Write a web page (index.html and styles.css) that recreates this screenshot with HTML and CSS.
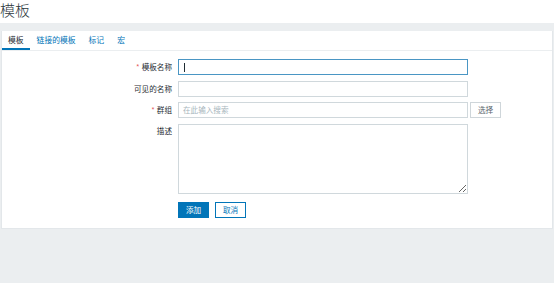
FILE: index.html
```html
<!DOCTYPE html>
<html lang="zh">
<head>
<meta charset="utf-8">
<link rel="stylesheet" href="styles.css">
</head>
<body>
<header class="page-header"><h1 class="title">模板</h1></header>
<main class="wrap">
  <section class="card">
    <nav class="tabs">
      <span class="tab active">模板</span>
      <span class="tab">链接的模板</span>
      <span class="tab">标记</span>
      <span class="tab">宏</span>
    </nav>
    <form class="form">
      <label class="lbl"><span class="req">*</span>模板名称</label>
      <div class="field"><div class="input focus"><span class="caret"></span></div></div>

      <label class="lbl">可见的名称</label>
      <div class="field"><div class="input"></div></div>

      <label class="lbl"><span class="req">*</span>群组</label>
      <div class="field row"><div class="input"><span class="ph">在此输入搜索</span></div><span class="btn-alt">选择</span></div>

      <label class="lbl top">描述</label>
      <div class="field"><textarea class="textarea"></textarea></div>

      <span></span>
      <div class="field actions"><span class="btn primary">添加</span><span class="btn secondary">取消</span></div>
    </form>
  </section>
</main>
</body>
</html>
```

FILE: styles.css
```css
* { box-sizing: border-box; }
html, body { margin: 0; padding: 0; }
body {
  background: #ebeef0;
  font-family: "Noto Sans CJK SC", "Noto Sans", sans-serif;
  color: #1f2c33;
  width: 554px;
  height: 283px;
  overflow: hidden;
}
.page-header {
  background: #ffffff;
  height: 23px;
}
.title {
  margin: 0;
  font-size: 15px;
  font-weight: 300;
  line-height: 20px;
  color: #2b363c;
}
.wrap {
  padding: 8px 1px 0 1px;
}
.card {
  background: #fff;
  border: 1px solid #e3e7ea;
  border-top: none;
  height: 198px;
}
.tabs {
  display: flex;
  height: 20px;
  border-bottom: 1px solid #ebeef0;
}
.tab {
  font-size: 7.8px;
  line-height: 18px;
  padding: 0 6px;
  margin-right: 1px;
  color: #0275b8;
  border-bottom: 2px solid transparent;
  height: 19px;
}
.tab.active {
  color: #1f2c33;
  border-bottom-color: #0275b8;
}
.form {
  display: grid;
  grid-template-columns: 170px 290px;
  column-gap: 6px;
  row-gap: 5.5px;
  padding-top: 8px;
  font-size: 7.6px;
}
.lbl {
  text-align: right;
  line-height: 16px;
  color: #1f2c33;
}
.lbl.top { line-height: 14px; }
.req { color: #e45959; margin-right: 2px; }
.field { position: relative; }
.row { display: flex; gap: 2px; width: 324px; }
.input {
  position: relative;
  width: 290px;
  height: 16px;
  border: 1px solid #d0d8dc;
  background: #fff;
  flex: none;
}
.input.focus { border-color: #4a96c4; }
.caret {
  position: absolute;
  left: 5px;
  top: 3px;
  width: 1px;
  height: 9px;
  background: #1f2c33;
}
.ph {
  display: block;
  color: #a8b6bd;
  line-height: 14px;
  padding-left: 4px;
}
.btn-alt {
  display: inline-block;
  width: 31px;
  height: 16px;
  border: 1px solid #cfd6da;
  color: #5a666d;
  text-align: center;
  line-height: 14px;
  background: #fff;
}
.textarea {
  display: block;
  width: 290px;
  height: 70px;
  border: 1px solid #d0d8dc;
  margin: 0;
  padding: 0;
  resize: both;
  outline: none;
}
.actions { display: flex; gap: 6px; padding-top: 3px; }
.btn {
  display: inline-block;
  width: 31px;
  height: 16px;
  text-align: center;
  line-height: 14px;
  border: 1px solid #0275b8;
}
.primary { background: #0275b8; color: #fff; }
.secondary { background: #fff; color: #0275b8; }
```
